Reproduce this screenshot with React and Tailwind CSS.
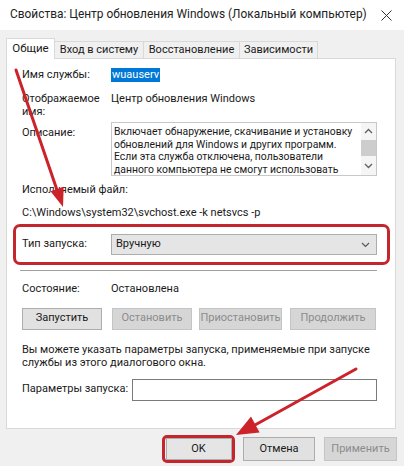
import React from "react";

const font = { fontFamily: 'Roboto, "Noto Sans", sans-serif' };

function Btn({ children, disabled, className = "" }) {
    return (
        <div
            className={
                "flex items-center justify-center border text-[11px] " +
                (disabled
                    ? "bg-[#d6d6d6] border-[#c4c4c4] text-[#8c8c8c] "
                    : "bg-[#e1e1e1] border-[#adadad] text-[#1a1a1a] ") +
                className
            }>
            {children}
        </div>
    );
}

// red annotation arrows drawn over the dialog
function Arrows() {
    return (
        <svg
            className="absolute inset-0 pointer-events-none"
            width="404"
            height="466"
            viewBox="0 0 404 466">
            <line x1="16" y1="70" x2="57" y2="190" stroke="#cc2229" strokeWidth="3" strokeLinecap="round" />
            <polygon points="63,207 50.5,191.3 63.7,186.7" fill="#cc2229" />
            <line x1="356" y1="369" x2="255" y2="425" stroke="#cc2229" strokeWidth="3" strokeLinecap="round" />
            <polygon points="236,435 251,416.6 259.6,432.4" fill="#cc2229" />
        </svg>
    );
}

export default function App() {
    return (
        <div
            className="relative w-[404px] h-[466px] overflow-hidden bg-[#f0f0f0] text-[#1a1a1a]"
            style={font}>
            {/* Title bar */}
            <div className="h-[30px] bg-white flex items-center justify-between pl-[10px] pr-[12px]">
                <span className="text-[11.9px] text-[#222] whitespace-nowrap">
                    Свойства: Центр обновления Windows (Локальный компьютер)
                </span>
                <svg width="11" height="11" viewBox="0 0 11 11">
                    <path d="M0.5 0.5 L10.5 10.5 M10.5 0.5 L0.5 10.5" stroke="#333" strokeWidth="1" />
                </svg>
            </div>

            {/* Tabs */}
            <div className="flex items-end pl-[6px] pt-[7px] h-[28px]">
                <div className="h-[21px] w-[49px] bg-white border border-b-0 border-[#d9d9d9] flex items-center justify-center text-[11.5px] relative top-[1px] z-10">
                    Общие
                </div>
                <div className="h-[17px] w-[89px] border border-l-0 border-b-0 border-[#d9d9d9] flex items-center justify-center text-[11px]">
                    Вход в систему
                </div>
                <div className="h-[17px] w-[96px] border border-l-0 border-b-0 border-[#d9d9d9] flex items-center justify-center text-[11px]">
                    Восстановление
                </div>
                <div className="h-[17px] w-[78px] border border-l-0 border-b-0 border-[#d9d9d9] flex items-center justify-center text-[11px]">
                    Зависимости
                </div>
            </div>

            {/* General page */}
            <div className="ml-[6px] w-[390px] h-[371px] bg-white border border-[#d9d9d9] pl-[15px] pr-[18px] text-[11px] leading-[12.5px]">
                <div className="flex mt-[9px] h-[14px] items-center">
                    <div className="w-[89px]">Имя службы:</div>
                    <div className="bg-[#0078d7] text-white px-[1px] leading-[14px]">wuauserv</div>
                </div>

                <div className="flex mt-[11px]">
                    <div className="w-[89px]">
                        Отображаемое
                        <br />
                        имя:
                    </div>
                    <div>Центр обновления Windows</div>
                </div>

                <div className="flex mt-[4px]">
                    <div className="w-[89px] pt-[5px]">Описание:</div>
                    <div className="w-[266px] h-[54px] border border-[#c8c8c8] flex">
                        <div className="flex-1 pl-[2px] pt-[3px] text-[10.4px] leading-[12.7px] whitespace-nowrap overflow-hidden">
                            Включает обнаружение, скачивание и установку
                            <br />
                            обновлений для Windows и других программ.
                            <br />
                            Если эта служба отключена, пользователи
                            <br />
                            данного компьютера не смогут использовать
                        </div>
                        <div className="w-[15px] flex flex-col items-center bg-[#f5f5f5]">
                            <svg className="mt-[5px]" width="9" height="6" viewBox="0 0 9 6">
                                <path d="M1 5 L4.5 1.5 L8 5" stroke="#606060" strokeWidth="1.3" fill="none" />
                            </svg>
                            <div className="mt-[6px] w-[15px] h-[16px] bg-[#cdcdcd]"></div>
                            <svg className="mt-[7px]" width="9" height="6" viewBox="0 0 9 6">
                                <path d="M1 1 L4.5 4.5 L8 1" stroke="#606060" strokeWidth="1.3" fill="none" />
                            </svg>
                        </div>
                    </div>
                </div>

                <div className="mt-[8px]">Исполняемый файл:</div>
                <div className="mt-[10px]">C:\Windows\system32\svchost.exe -k netsvcs -p</div>

                {/* Startup type, outlined in red */}
                <div className="mt-[5px] -ml-[9px] w-[377px] h-[41px] border-[3px] border-[#c4262d] rounded-[7px] flex items-center pl-[6px]">
                    <div className="w-[89px]">Тип запуска:</div>
                    <div className="w-[266px] h-[21px] bg-[#e5e5e5] border border-[#adadad] flex items-center justify-between pl-[4px] pr-[6px]">
                        <span>Вручную</span>
                        <svg width="9" height="6" viewBox="0 0 9 6">
                            <path d="M1 1 L4.5 4.5 L8 1" stroke="#555" strokeWidth="1.1" fill="none" />
                        </svg>
                    </div>
                </div>

                <div className="mt-[5px] -ml-[2px] w-[357px] h-[2px] border-t border-[#a0a0a0] border-b border-b-white"></div>

                <div className="flex mt-[11px]">
                    <div className="w-[89px]">Состояние:</div>
                    <div>Остановлена</div>
                </div>

                <div className="flex mt-[12px] h-[22px]">
                    <Btn className="w-[80px]">Запустить</Btn>
                    <Btn disabled className="w-[80px] ml-[10px]">Остановить</Btn>
                    <Btn disabled className="w-[83px] ml-[7px]">Приостановить</Btn>
                    <Btn disabled className="w-[86px] ml-[8px]">Продолжить</Btn>
                </div>

                <div className="mt-[13px] leading-[13px]">
                    Вы можете указать параметры запуска, применяемые при запуске
                    <br />
                    службы из этого диалогового окна.
                </div>

                <div className="flex items-center mt-[10px]">
                    <div className="w-[110px]">Параметры запуска:</div>
                    <div className="w-[245px] h-[22px] border border-[#7a7a7a] bg-white"></div>
                </div>
            </div>

            {/* Dialog buttons */}
            <div className="flex justify-end pr-[7px] mt-[6px]">
                <div className="w-[73px] h-[28px] border-[3px] border-[#c4262d] rounded-[5px] flex items-center justify-center">
                    <Btn className="w-[66px] h-[22px] bg-[#e5e5e5]">OK</Btn>
                </div>
                <Btn className="w-[72px] h-[24px] ml-[8px] mt-[2px]">Отмена</Btn>
                <Btn disabled className="w-[73px] h-[24px] ml-[9px] mt-[2px]">Применить</Btn>
            </div>

            <Arrows />
        </div>
    );
}
